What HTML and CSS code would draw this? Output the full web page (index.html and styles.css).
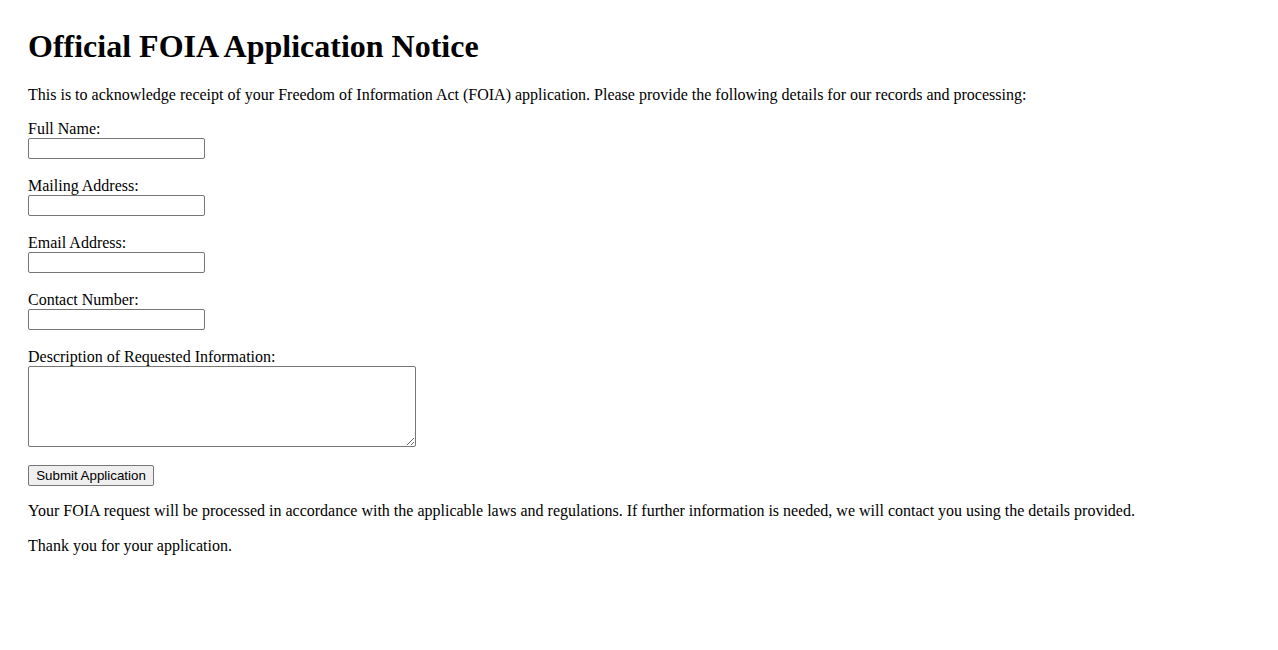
FILE: index.html
```html
<!DOCTYPE html>
<html lang="en">
<head>
<meta charset="utf-8">
<title>Official FOIA Application Notice</title>
<link rel="stylesheet" href="styles.css">
</head>
<body>
<main class="page">
  <h1 class="title">Official FOIA Application Notice</h1>
  <p class="text">This is to acknowledge receipt of your Freedom of Information Act (FOIA) application. Please provide the following details for our records and processing:</p>
  <form class="form">
    <div class="field">
      <label class="label" for="name">Full Name:</label>
      <input class="input" type="text" id="name">
    </div>
    <div class="field">
      <label class="label" for="address">Mailing Address:</label>
      <input class="input" type="text" id="address">
    </div>
    <div class="field">
      <label class="label" for="email">Email Address:</label>
      <input class="input" type="email" id="email">
    </div>
    <div class="field">
      <label class="label" for="phone">Contact Number:</label>
      <input class="input" type="tel" id="phone">
    </div>
    <div class="field field-area">
      <label class="label" for="desc">Description of Requested Information:</label>
      <textarea class="textarea" id="desc"></textarea>
    </div>
    <button class="button" type="submit">Submit Application</button>
  </form>
  <p class="text">Your FOIA request will be processed in accordance with the applicable laws and regulations. If further information is needed, we will contact you using the details provided.</p>
  <p class="text text-last">Thank you for your application.</p>
</main>
</body>
</html>
```

FILE: styles.css
```css
html, body {
  margin: 0;
  padding: 0;
  background: #ffffff;
}

body {
  font-family: "Liberation Serif", "Times New Roman", serif;
  font-size: 16px;
  color: #000000;
}

.page {
  padding: 28px 28px;
}

.title {
  margin: 0 0 21px 0;
  font-size: 32px;
  font-weight: bold;
  line-height: 37px;
}

.text {
  margin: 0 0 16px 0;
  line-height: 18px;
}

.text-last {
  margin-top: 17px;
}

.form {
  margin: 0 0 16px 0;
}

.field {
  margin-bottom: 18px;
}

.label {
  display: block;
  line-height: 18px;
  height: 18px;
}

.input {
  display: block;
  box-sizing: border-box;
  width: 177px;
  height: 21px;
  margin: 0;
  padding: 1px 2px;
  border: 1px solid #767676;
  border-radius: 2px;
  background: #ffffff;
  font-family: "Liberation Sans", Arial, sans-serif;
  font-size: 13.33px;
}

.textarea {
  display: block;
  box-sizing: border-box;
  width: 388px;
  height: 81px;
  margin: 0;
  padding: 2px;
  border: 1px solid #767676;
  border-radius: 2px;
  background: #ffffff;
  font-family: "Liberation Mono", monospace;
  font-size: 13.33px;
  resize: both;
}

.field-area {
  margin-bottom: 18px;
}

.button {
  display: block;
  box-sizing: border-box;
  height: 21px;
  width: 126px;
  margin: 0;
  padding: 1px 6px;
  border: 1px solid #767676;
  border-radius: 2px;
  background: #efefef;
  color: #000000;
  font-family: "Liberation Sans", Arial, sans-serif;
  font-size: 13.33px;
  line-height: 17px;
}
```
